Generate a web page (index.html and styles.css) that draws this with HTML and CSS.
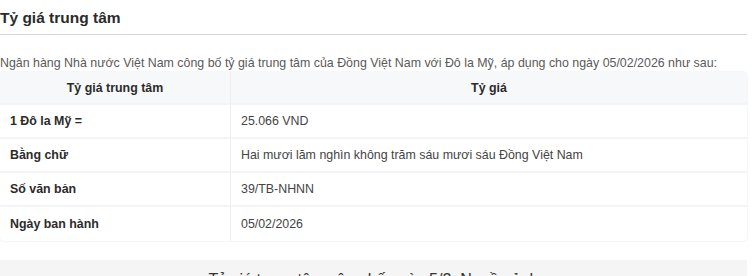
FILE: index.html
```html
<!DOCTYPE html>
<html lang="vi">
<head>
<meta charset="utf-8">
<link rel="stylesheet" href="styles.css">
</head>
<body>
<div class="page">
  <h2 class="title">Tỷ giá trung tâm</h2>
  <p class="intro">Ngân hàng Nhà nước Việt Nam công bố tỷ giá trung tâm của Đồng Việt Nam với Đô la Mỹ, áp dụng cho ngày 05/02/2026 như sau:</p>
  <table class="rate">
    <thead>
      <tr><th class="c1">Tỷ giá trung tâm</th><th>Tỷ giá</th></tr>
    </thead>
    <tbody>
      <tr><td class="lbl">1 Đô la Mỹ =</td><td>25.066 VND</td></tr>
      <tr><td class="lbl">Bằng chữ</td><td>Hai mươi lăm nghìn không trăm sáu mươi sáu Đồng Việt Nam</td></tr>
      <tr><td class="lbl">Số văn bản</td><td>39/TB-NHNN</td></tr>
      <tr><td class="lbl">Ngày ban hành</td><td>05/02/2026</td></tr>
    </tbody>
  </table>
  <div class="note">Tỷ giá trung tâm công bố ngày 5/2: Nguồn ảnh</div>
</div>
</body>
</html>
```
FILE: styles.css
```css
html, body { margin: 0; padding: 0; background: #fff; }
html { overflow: hidden; }
body { font-family: "Liberation Sans", Arial, sans-serif; color: #333; }
.page { width: 747px; }
.title { margin: 0; padding: 9px 0 8px 0; font-size: 15.5px; line-height: 17px; font-weight: bold; color: #2b2b2b; border-bottom: 1px solid #d4d4d4; }
.intro { margin: 20px 0 0 0; font-size: 12.4px; line-height: 17px; color: #5a5a5a; white-space: nowrap; }
.rate { width: 100%; border-collapse: separate; border-spacing: 0; margin-top: 0; font-size: 12.4px; color: #333; border-radius: 4px; box-shadow: 0 0 2px rgba(0,0,0,0.12); overflow: hidden; }
.rate th, .rate td { height: 34px; padding: 0 10px; box-sizing: border-box; border-bottom: 2px solid #f3f4f6; }
.rate th { height: 33px; }
.rate tbody tr:last-child td { border-bottom: none; }
.rate th { background: #f7f8fa; font-weight: bold; text-align: center; color: #2b2b2b; }
.rate .c1, .rate .lbl { width: 231px; border-right: 1px solid #eceef1; }
.rate .lbl { font-weight: bold; color: #2b2b2b; }
.rate td { color: #444; }
.note { margin-top: 19px; background: #f5f5f5; height: 40px; padding-top: 11px; box-sizing: border-box; text-align: center; font-size: 16px; color: #333; }
```
